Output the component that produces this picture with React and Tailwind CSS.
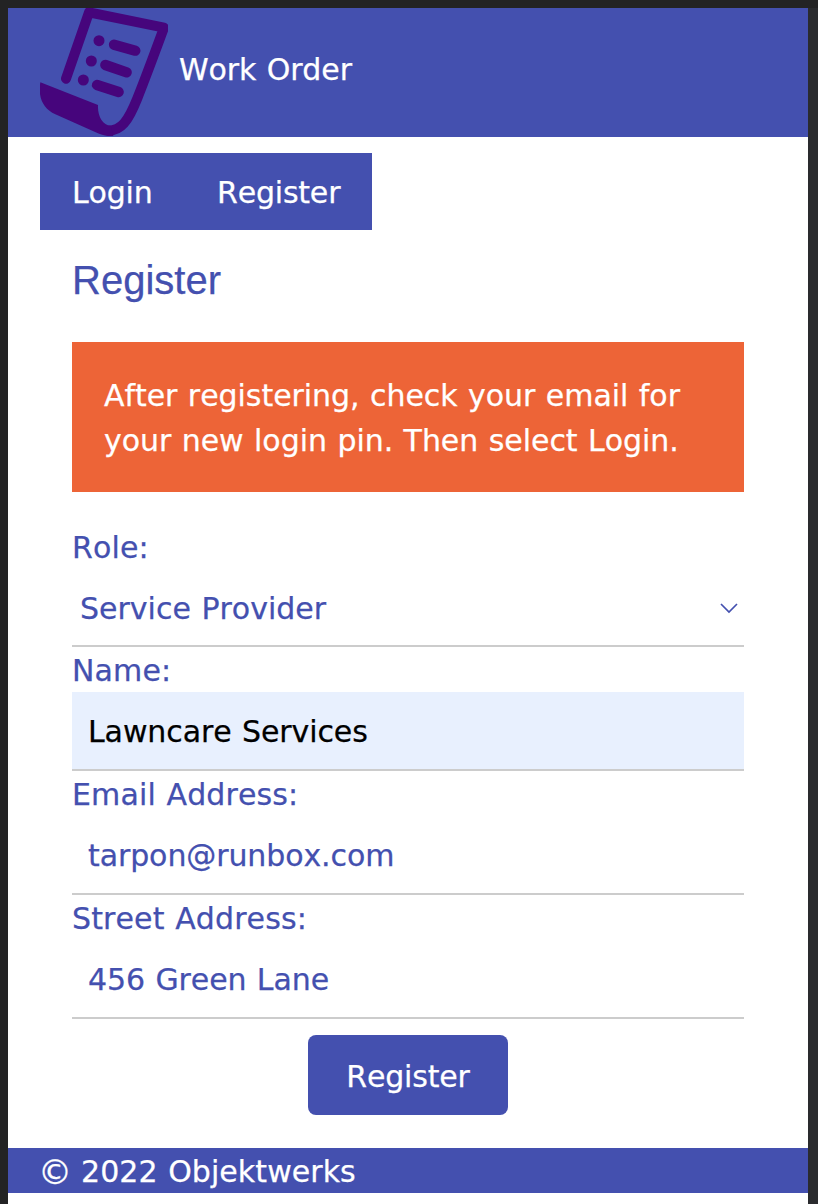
function ScrollIcon() {
  return (
    <svg viewBox="120 24 384 384" className="block size-32 shrink-0 text-[#46057c]" fill="none" stroke="currentColor" strokeLinecap="round" aria-hidden="true">
      <path d="M198 236 L267 37 L492 83 C467 151 440 225 412 295 C384 365 363 392 325 392" strokeWidth="30" strokeLinejoin="round" />
      <path d="M121 247 L294 315 C292 348 308 377 332 377 L340 408 C316 409 307 406 287 397 L166 343 C131 327 113 295 121 247Z" fill="currentColor" stroke="none" />
      <path d="M342 134 L406 152 M316 195 L380 217 M291 255 L356 276" strokeWidth="31" />
      <g fill="currentColor" stroke="none">
        <circle cx="297" cy="122" r="16.5" />
        <circle cx="274" cy="183" r="16.5" />
        <circle cx="250" cy="240" r="16.5" />
      </g>
    </svg>
  );
}

function Field({ label, value, filled }) {
  return (
    <label className="block">
      <span className="block h-[45px] leading-[48px] tracking-[0.12px]">{label}</span>
      <span className={`block h-[79px] border-b-2 border-[#cccccc] px-4 leading-[80px] tracking-[-0.1px] ${filled ? "bg-[#e8f0fe] text-black" : ""}`}>
        {value}
      </span>
    </label>
  );
}

export default function App() {
  return (
    <div className="flex h-[1204px] w-[818px] flex-col bg-[#232324] pt-2 pl-2 font-['DejaVu_Sans',sans-serif] text-[30px] whitespace-nowrap text-[#4450af] [font-kerning:none] [font-variant-ligatures:none] [word-spacing:1px] [-webkit-text-stroke:0.25px_currentColor]">
      <div className="flex flex-1 bg-[#2a2b2e]">
        <div className="flex w-[800px] flex-col bg-white">
          <header className="flex h-[129px] items-start bg-[#4450af] pl-8 text-white">
            <ScrollIcon />
            <h1 className="ml-[11px] pt-[38px] leading-[48px] tracking-[-0.12px]">Work Order</h1>
          </header>
          <nav className="mt-4 ml-8 flex h-[77px] w-[332px] bg-[#4450af] pt-4 leading-[48px] tracking-[-0.2px] text-white">
            <a className="w-[145px] pl-8">Login</a>
            <a className="pl-8">Register</a>
          </nav>
          <main className="flex flex-1 flex-col px-16">
            <h2 className="h-[112px] pt-5 font-['Liberation_Sans',sans-serif] text-[40px] leading-[60px]">Register</h2>
            <div className="h-[150px] bg-[#ed6437] px-8 pt-[31px] leading-[45px] tracking-[-0.05px] text-white">
              <div>After registering, check your email for</div>
              <div>your new login pin. Then select Login.</div>
            </div>
            <div className="mt-[31px] h-[45px] leading-[50px] tracking-[0.12px]">Role:</div>
            <div className="flex h-[79px] items-start justify-between border-b-2 border-[#cccccc] pr-1.5 pl-2 leading-[82px]">
              <span>Service Provider</span>
              <svg viewBox="0 0 18 11" className="mt-[35px] h-[11px] w-[18px]" fill="none" stroke="currentColor" strokeWidth="1.7" aria-hidden="true">
                <path d="M1 1 L9 9 L17 1" />
              </svg>
            </div>
            <Field label="Name:" value="Lawncare Services" filled />
            <Field label="Email Address:" value="tarpon@runbox.com" />
            <Field label="Street Address:" value="456 Green Lane" />
            <button className="mt-4 h-20 w-[200px] self-center rounded-lg bg-[#4450af] pt-0.5 tracking-[-0.2px] text-white">Register</button>
          </main>
          <footer className="mb-[11px] flex h-[45px] bg-[#4450af] pl-8 leading-[48px] text-white">
            <span className="-ml-0.5 w-[42px] text-[34px] leading-[49px]">©</span>
            <span className="ml-px tracking-[0.06px]">2022 Objektwerks</span>
          </footer>
        </div>
      </div>
    </div>
  );
}
